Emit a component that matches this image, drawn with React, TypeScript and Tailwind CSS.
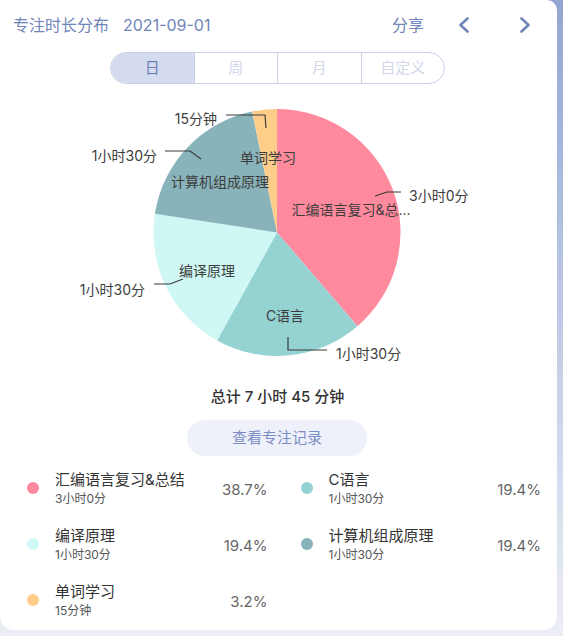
import React from 'react';

const CX = 277;
const CY = 232.5;
const R = 123.5;

interface Slice {
  name: string;
  time: string;
  minutes: number;
  color: string;
}

const slices: Slice[] = [
  { name: '汇编语言复习&总结', time: '3小时0分', minutes: 180, color: '#ff8a9e' },
  { name: 'C语言', time: '1小时30分', minutes: 90, color: '#95d3d3' },
  { name: '编译原理', time: '1小时30分', minutes: 90, color: '#cff7f4' },
  { name: '计算机组成原理', time: '1小时30分', minutes: 90, color: '#88b3bb' },
  { name: '单词学习', time: '15分钟', minutes: 15, color: '#fecd89' },
];

const total = slices.reduce((s, x) => s + x.minutes, 0);

const point = (deg: number) => {
  const a = (deg * Math.PI) / 180;
  return [CX + R * Math.sin(a), CY - R * Math.cos(a)];
};

const slicePath = (start: number, end: number) => {
  const [x0, y0] = point(start);
  const [x1, y1] = point(end);
  const large = end - start > 180 ? 1 : 0;
  return `M${CX} ${CY} L${x0} ${y0} A${R} ${R} 0 ${large} 1 ${x1} ${y1} Z`;
};

const PieChart: React.FC = () => {
  let acc = 0;
  const paths = slices.map((s) => {
    const start = (acc / total) * 360;
    acc += s.minutes;
    const end = (acc / total) * 360;
    return <path key={s.name} d={slicePath(start, end)} fill={s.color} />;
  });

  const inner = [
    { text: '单词学习', x: 268, y: 157 },
    { text: '计算机组成原理', x: 220, y: 181 },
    { text: '汇编语言复习&总...', x: 351, y: 209 },
    { text: '编译原理', x: 207, y: 270 },
    { text: 'C语言', x: 285, y: 315 },
  ];

  const outer = [
    { text: '15分钟', x: 217, y: 118, anchor: 'end' },
    { text: '1小时30分', x: 157, y: 155, anchor: 'end' },
    { text: '3小时0分', x: 409, y: 195, anchor: 'start' },
    { text: '1小时30分', x: 145, y: 289, anchor: 'end' },
    { text: '1小时30分', x: 336, y: 353, anchor: 'start' },
  ];

  const lines = [
    'M266 128 L265 115 L226 115',
    'M201 159 L190 151 L165 151',
    'M375 196 L387 192 L401 192',
    'M183 279 L170 284 L154 284',
    'M288 337 L288 350 L327 350',
  ];

  return (
    <svg width="557" height="288" className="block">
      <g transform="translate(0,-84)">
        {paths}
        {lines.map((d) => (
          <path key={d} d={d} fill="none" stroke="#3a3a3a" strokeWidth="1.2" />
        ))}
        {inner.map((t) => (
          <text
            key={t.text}
            x={t.x}
            y={t.y}
            textAnchor="middle"
            dominantBaseline="central"
            fontSize="14"
            fill="#3d3d3d"
          >
            {t.text}
          </text>
        ))}
        {outer.map((t, i) => (
          <text
            key={i}
            x={t.x}
            y={t.y}
            textAnchor={t.anchor as 'start' | 'end'}
            dominantBaseline="central"
            fontSize="14"
            fill="#3d3d3d"
          >
            {t.text}
          </text>
        ))}
      </g>
    </svg>
  );
};

const App: React.FC = () => {
  const tabs = ['日', '周', '月', '自定义'];

  return (
    <div
      className="w-[563px] h-[636px] bg-linear-to-b from-[#93a6d3] to-[#eceef5] overflow-hidden"
      style={{ fontFamily: 'Inter, "Noto Sans CJK SC", sans-serif' }}
    >
      <div className="w-[557px] h-[630px] bg-white rounded-tr-[10px] rounded-br-[14px] rounded-bl-[14px]">
        {/* header */}
        <div className="h-[50px] flex items-center pl-[13px] text-[#7085b9]">
          <span className="text-[16px]">专注时长分布</span>
          <span className="text-[16px] ml-[14px]">2021-09-01</span>
          <span className="text-[16px] ml-auto">分享</span>
          <svg width="12" height="16" viewBox="0 0 12 16" className="ml-[34px]">
            <polyline
              points="9.5,1.5 2.5,8 9.5,14.5"
              fill="none"
              stroke="#7085b9"
              strokeWidth="2.6"
              strokeLinecap="round"
              strokeLinejoin="round"
            />
          </svg>
          <svg width="12" height="16" viewBox="0 0 12 16" className="ml-[49px] mr-[26px]">
            <polyline
              points="2.5,1.5 9.5,8 2.5,14.5"
              fill="none"
              stroke="#7085b9"
              strokeWidth="2.6"
              strokeLinecap="round"
              strokeLinejoin="round"
            />
          </svg>
        </div>

        {/* segmented control */}
        <div className="mt-[2px] ml-[110px] w-[335px] h-[32px] flex rounded-full border border-[#cad2e8] overflow-hidden">
          {tabs.map((t, i) => (
            <div
              key={t}
              className={
                'flex-1 flex items-center justify-center text-[15px] ' +
                (i > 0 ? 'border-l border-[#cad2e8] ' : '') +
                (i === 0 ? 'bg-[#d4dbee] text-[#6a7eb6]' : 'text-[#d2d8ea]')
              }
            >
              {t}
            </div>
          ))}
        </div>

        {/* chart */}
        <PieChart />

        {/* total */}
        <div className="mt-[13px] h-[24px] flex items-center justify-center text-[15px] font-medium text-[#333] -ml-[2px]">
          总计 7 小时 45 分钟
        </div>

        <div className="mt-[11px] ml-[187px] w-[180px] h-[36px] rounded-full bg-[#eef0fa] flex items-center justify-center text-[15px] text-[#7b8fc5]">
          查看专注记录
        </div>

        {/* legend */}
        <div className="mt-[6px] pl-[27px] pr-[16px] grid grid-cols-2 gap-x-[33px]">
          {slices.map((s) => {
            const pct = ((s.minutes / total) * 100).toFixed(1) + '%';
            return (
              <div key={s.name} className="h-[56px] flex items-center">
                <div
                  className="w-3 h-3 rounded-full shrink-0 -mt-[4px]"
                  style={{ backgroundColor: s.color }}
                />
                <div className="flex-1 ml-4 flex flex-col -mt-[5px]">
                  <span className="text-[15px] leading-[19px] text-[#333]">{s.name}</span>
                  <span className="mt-[2px] text-[12px] leading-[15px] text-[#555]">{s.time}</span>
                </div>
                <span className="text-[15px] text-[#666]">{pct}</span>
              </div>
            );
          })}
        </div>
      </div>
    </div>
  );
};

export default App;
